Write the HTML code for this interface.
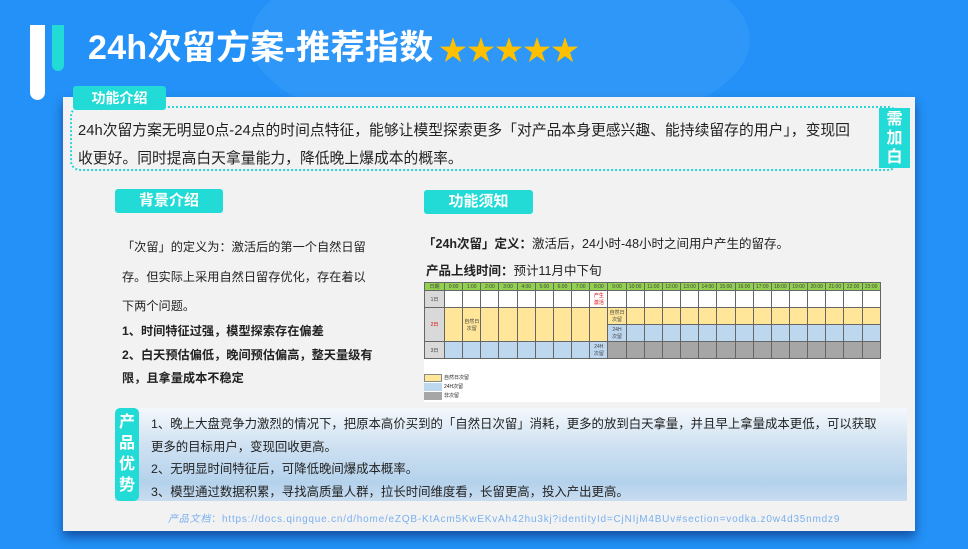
<!DOCTYPE html>
<html><head><meta charset="utf-8"><style>
*{margin:0;padding:0;box-sizing:border-box}
body{width:968px;height:549px;overflow:hidden;background:#2391f7;font-family:"Liberation Sans","Noto Sans CJK SC",sans-serif;position:relative}
.abs{position:absolute}
.tag{position:absolute;background:#22dbd6;color:#fff;font-weight:bold;text-align:center;border-radius:3px}
.t{position:absolute;color:#222;white-space:nowrap}
table{border-collapse:collapse;table-layout:fixed;font-size:5px;position:absolute;left:424px;top:282px;width:456px}
td{border:1px solid #666;text-align:center;padding:0;color:#444;overflow:hidden}
</style></head><body>
<div class="abs" style="left:250px;top:-60px;width:500px;height:200px;border-radius:50%;background:rgba(255,255,255,0.06)"></div>
<div class="abs" style="left:30px;top:25px;width:15px;height:75px;background:#fff;border-radius:0 0 8px 8px"></div>
<div class="abs" style="left:52px;top:25px;width:12px;height:46px;background:#22dbd6;border-radius:0 0 6px 6px"></div>
<div class="abs" style="left:88px;top:20px;color:#fff;font-size:34px;font-weight:bold;white-space:nowrap;letter-spacing:0.3px">24h次留方案-推荐指数</div>
<div class="abs" style="left:439px;top:29px;color:#ffc000;font-size:28px;letter-spacing:0px;white-space:nowrap">★★★★★</div>
<div class="abs" style="left:63px;top:97px;width:852px;height:434px;background:#f2f2f2;box-shadow:0 6px 10px rgba(0,0,60,0.45)"></div>
<div class="abs" style="left:70px;top:106px;width:828px;height:65px;border:2px dotted #2ad6d6;border-radius:10px"></div>
<div class="tag" style="left:73px;top:86px;width:93px;height:24px;font-size:14px;line-height:24px">功能介绍</div>
<div class="tag" style="left:879px;top:108px;width:31px;height:60px;font-size:16px;line-height:19px;padding-top:2px;border-radius:0">需<br>加<br>白</div>
<div class="t" style="left:78px;top:117px;font-size:14.8px;line-height:28px">24h次留方案无明显0点-24点的时间点特征，能够让模型探索更多「对产品本身更感兴趣、能持续留存的用户」，变现回<br>收更好。同时提高白天拿量能力，降低晚上爆成本的概率。</div>
<div class="tag" style="left:115px;top:189px;width:108px;height:24px;font-size:15px;line-height:24px">背景介绍</div>
<div class="tag" style="left:424px;top:190px;width:109px;height:24px;font-size:15px;line-height:24px">功能须知</div>
<div class="t" style="left:122px;top:233px;font-size:12.2px;line-height:29.5px">「次留」的定义为：激活后的第一个自然日留<br>存。但实际上采用自然日留存优化，存在着以<br>下两个问题。</div>
<div class="t" style="left:122px;top:320px;font-size:12.2px;line-height:23.5px;font-weight:bold">1、时间特征过强，模型探索存在偏差<br>2、白天预估偏低，晚间预估偏高，整天量级有<br>限，且拿量成本不稳定</div>
<div class="t" style="left:423px;top:233px;font-size:12.5px"><b>「24h次留」定义：</b>激活后，24小时-48小时之间用户产生的留存。</div>
<div class="t" style="left:426px;top:260px;font-size:12.5px"><b>产品上线时间：</b>预计11月中下旬</div>
<div class="abs" style="left:424px;top:282px;width:456px;height:120px;background:#fff"></div>
<table>
<colgroup><col style="width:20px"><col span="24" style="width:18.16px"></colgroup>
<tr style="background:#92d050;height:8px"><td>日期</td><td>0:00</td><td>1:00</td><td>2:00</td><td>3:00</td><td>4:00</td><td>5:00</td><td>6:00</td><td>7:00</td><td>8:00</td><td>9:00</td><td>10:00</td><td>11:00</td><td>12:00</td><td>13:00</td><td>14:00</td><td>15:00</td><td>16:00</td><td>17:00</td><td>18:00</td><td>19:00</td><td>20:00</td><td>21:00</td><td>22:00</td><td>23:00</td></tr>
<tr style="height:17px;background:#fff"><td style="background:#d9d9d9">1日</td><td></td><td></td><td></td><td></td><td></td><td></td><td></td><td></td><td style="color:#d00">产生<br>激活</td><td></td><td></td><td></td><td></td><td></td><td></td><td></td><td></td><td></td><td></td><td></td><td></td><td></td><td></td><td></td></tr>
<tr style="height:17px;background:#ffe699"><td rowspan="2" style="background:#d9d9d9;color:#d00">2日</td><td rowspan="2"></td><td rowspan="2">自然日<br>次留</td><td rowspan="2"></td><td rowspan="2"></td><td rowspan="2"></td><td rowspan="2"></td><td rowspan="2"></td><td rowspan="2"></td><td rowspan="2"></td><td>自然日<br>次留</td><td></td><td></td><td></td><td></td><td></td><td></td><td></td><td></td><td></td><td></td><td></td><td></td><td></td><td></td></tr>
<tr style="height:17px;background:#bdd7ee"><td>24H<br>次留</td><td></td><td></td><td></td><td></td><td></td><td></td><td></td><td></td><td></td><td></td><td></td><td></td><td></td><td></td></tr>
<tr style="height:17px;background:#bdd7ee"><td style="background:#d9d9d9">3日</td><td></td><td></td><td></td><td></td><td></td><td></td><td></td><td></td><td>24H<br>次留</td><td style="background:#a6a6a6"></td><td style="background:#a6a6a6"></td><td style="background:#a6a6a6"></td><td style="background:#a6a6a6"></td><td style="background:#a6a6a6"></td><td style="background:#a6a6a6"></td><td style="background:#a6a6a6"></td><td style="background:#a6a6a6"></td><td style="background:#a6a6a6"></td><td style="background:#a6a6a6"></td><td style="background:#a6a6a6"></td><td style="background:#a6a6a6"></td><td style="background:#a6a6a6"></td><td style="background:#a6a6a6"></td><td style="background:#a6a6a6"></td></tr>
</table>
<div class="abs" style="left:424px;top:374px;width:18px;height:8px;background:#ffe699;border:1px solid #888"></div>
<div class="abs" style="left:424px;top:383px;width:18px;height:8px;background:#bdd7ee"></div>
<div class="abs" style="left:424px;top:392px;width:18px;height:8px;background:#a6a6a6"></div>
<div class="t" style="left:444px;top:374px;font-size:5px;line-height:9px">自然日次留<br>24H次留<br>非次留</div>
<div class="abs" style="left:115px;top:408px;width:792px;height:93px;background:linear-gradient(#f4f8fc,#cfe1f2 40%,#b4d2ec 80%,#c8dcf0)"></div>
<div class="tag" style="left:115px;top:408px;width:24px;height:93px;font-size:16px;line-height:21px;padding-top:4px;border-radius:5px">产<br>品<br>优<br>势</div>
<div class="t" style="left:151px;top:413px;font-size:12.4px;line-height:22.5px">1、晚上大盘竞争力激烈的情况下，把原本高价买到的「自然日次留」消耗，更多的放到白天拿量，并且早上拿量成本更低，可以获取<br>更多的目标用户，变现回收更高。<br>2、无明显时间特征后，可降低晚间爆成本概率。<br>3、模型通过数据积累，寻找高质量人群，拉长时间维度看，长留更高，投入产出更高。</div>
<div class="t" style="left:168px;top:510px;font-size:10px;color:#7ab0f0;letter-spacing:0.8px"><i>产品文档</i>：https://docs.qingque.cn/d/home/eZQB-KtAcm5KwEKvAh42hu3kj?identityId=CjNIjM4BUv#section=vodka.z0w4d35nmdz9</div>
</body></html>
